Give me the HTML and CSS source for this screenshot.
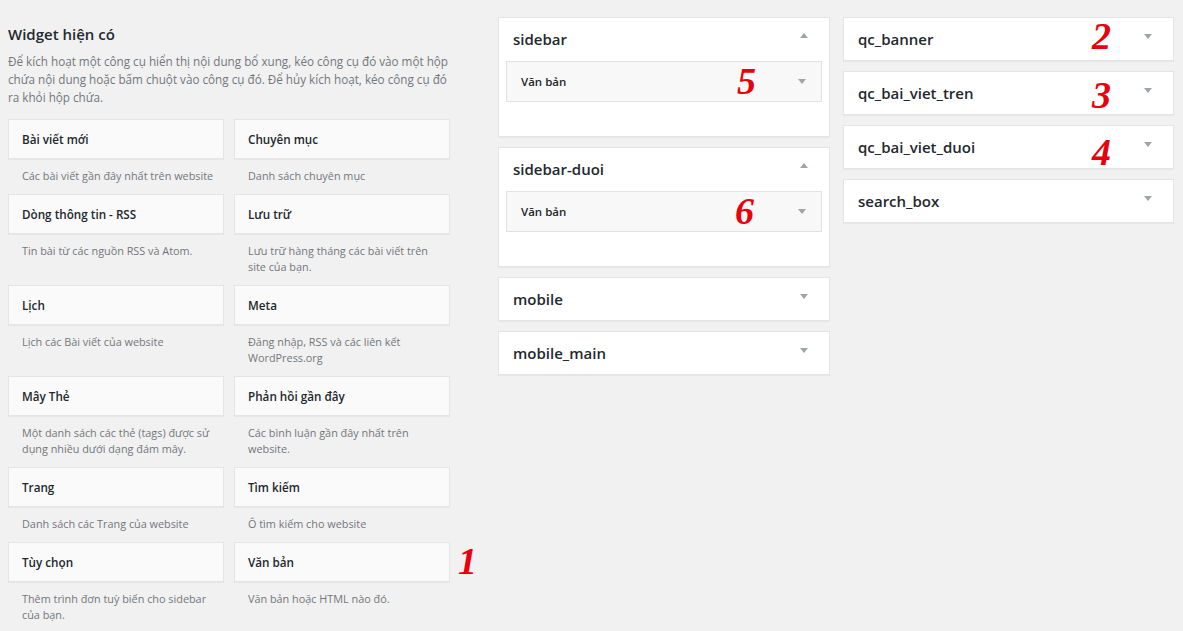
FILE: index.html
```html
<!DOCTYPE html>
<html lang="vi">
<head>
    <meta charset="UTF-8">
    <meta name="viewport" content="width=device-width, initial-scale=1.0">
    <title>Widget</title>
    <link rel="stylesheet" href="styles.css">
</head>
<body>
    <div class="wrap">
        <!-- Cột widget hiện có -->
        <div class="available">
            <h2 class="title">Widget hiện có</h2>
            <p class="intro">Để kích hoạt một công cụ hiển thị nội dung bổ xung, kéo công cụ đó vào một hộp chứa nội dung hoặc bấm chuột vào công cụ đó. Để hủy kích hoạt, kéo công cụ đó ra khỏi hộp chứa.</p>

            <div class="widget-list">
                <div class="item">
                    <div class="card">Bài viết mới</div>
                    <div class="desc">Các bài viết gần đây nhất trên website</div>
                </div>
                <div class="item">
                    <div class="card">Chuyên mục</div>
                    <div class="desc">Danh sách chuyên mục</div>
                </div>
                <div class="item">
                    <div class="card">Dòng thông tin - RSS</div>
                    <div class="desc">Tin bài từ các nguồn RSS và Atom.</div>
                </div>
                <div class="item">
                    <div class="card">Lưu trữ</div>
                    <div class="desc">Lưu trữ hàng tháng các bài viết trên site của bạn.</div>
                </div>
                <div class="item">
                    <div class="card">Lịch</div>
                    <div class="desc">Lịch các Bài viết của website</div>
                </div>
                <div class="item">
                    <div class="card">Meta</div>
                    <div class="desc">Đăng nhập, RSS và các liên kết WordPress.org</div>
                </div>
                <div class="item">
                    <div class="card">Mây Thẻ</div>
                    <div class="desc">Một danh sách các thẻ (tags) được sử dụng nhiều dưới dạng đám mây.</div>
                </div>
                <div class="item">
                    <div class="card">Phản hồi gần đây</div>
                    <div class="desc">Các bình luận gần đây nhất trên website.</div>
                </div>
                <div class="item">
                    <div class="card">Trang</div>
                    <div class="desc">Danh sách các Trang của website</div>
                </div>
                <div class="item">
                    <div class="card">Tìm kiếm</div>
                    <div class="desc">Ô tìm kiếm cho website</div>
                </div>
                <div class="item">
                    <div class="card">Tùy chọn</div>
                    <div class="desc">Thêm trình đơn tuỳ biến cho sidebar của bạn.</div>
                </div>
                <div class="item">
                    <div class="card">Văn bản<span class="num n1">1</span></div>
                    <div class="desc">Văn bản hoặc HTML nào đó.</div>
                </div>
            </div>
        </div>

        <!-- Cột sidebar giữa -->
        <div class="areas">
            <div class="box open">
                <div class="box-head">sidebar<span class="arrow up"></span></div>
                <div class="box-body">
                    <div class="placed">Văn bản<span class="num n5">5</span><span class="arrow down"></span></div>
                </div>
            </div>
            <div class="box open">
                <div class="box-head">sidebar-duoi<span class="arrow up"></span></div>
                <div class="box-body">
                    <div class="placed">Văn bản<span class="num n6">6</span><span class="arrow down"></span></div>
                </div>
            </div>
            <div class="box">
                <div class="box-head">mobile<span class="arrow down"></span></div>
            </div>
            <div class="box">
                <div class="box-head">mobile_main<span class="arrow down"></span></div>
            </div>
        </div>

        <!-- Cột sidebar phải -->
        <div class="areas last">
            <div class="box">
                <div class="box-head">qc_banner<span class="num n2">2</span><span class="arrow down"></span></div>
            </div>
            <div class="box">
                <div class="box-head">qc_bai_viet_tren<span class="num n3">3</span><span class="arrow down"></span></div>
            </div>
            <div class="box">
                <div class="box-head">qc_bai_viet_duoi<span class="num n4">4</span><span class="arrow down"></span></div>
            </div>
            <div class="box">
                <div class="box-head">search_box<span class="arrow down"></span></div>
            </div>
        </div>
    </div>
</body>
</html>
```

FILE: styles.css
```css
body {
    margin: 0;
    background-color: #f1f1f1;
    font-family: "Open Sans", "Noto Sans", sans-serif;
    color: #23282d;
}
.wrap {
    display: flex;
    align-items: flex-start;
    padding: 17px 0 0 8px;
}
.available {
    flex-shrink: 0;
    width: 442px;
    margin-right: 48px;
    padding-top: 7px;
}
.title {
    margin: 0;
    font-size: 15px;
    line-height: 20px;
    font-weight: 600;
}
.intro {
    margin: 8px 0 13px;
    font-size: 11.7px;
    line-height: 18px;
    color: #72777c;
}
.widget-list {
    display: grid;
    grid-template-columns: 216px 216px;
    column-gap: 10px;
}
.card {
    position: relative;
    height: 40px;
    box-sizing: border-box;
    padding: 0 13px;
    background-color: #fafafa;
    border: 1px solid #e5e5e5;
    box-shadow: 0 1px 1px rgba(0,0,0,0.04);
    font-size: 11.7px;
    font-weight: 600;
    line-height: 38px;
}
.desc {
    padding: 9px 6px 10px 14px;
    font-size: 10.85px;
    line-height: 16px;
    color: #72777c;
}
.areas {
    flex-shrink: 0;
    width: 332px;
    margin-right: 13px;
}
.areas.last {
    width: 331px;
    margin-right: 0;
}
.box {
    position: relative;
    margin-bottom: 10px;
    background-color: #fff;
    border: 1px solid #e5e5e5;
    box-shadow: 0 1px 1px rgba(0,0,0,0.04);
}
.box-head {
    position: relative;
    height: 42px;
    padding-left: 14px;
    font-size: 15px;
    font-weight: 600;
    line-height: 42px;
}
.box-body {
    padding: 1px 7px 34px;
}
.placed {
    position: relative;
    height: 39px;
    padding-left: 14px;
    background-color: #f8f8f8;
    border: 1px solid #e2e2e2;
    font-size: 11.5px;
    font-weight: 600;
    line-height: 39px;
}
.arrow {
    position: absolute;
    width: 0;
    height: 0;
    border-left: 4px solid transparent;
    border-right: 4px solid transparent;
}
.arrow.up {
    right: 21px;
    top: 15px;
    border-bottom: 5px solid #a0a5aa;
}
.arrow.down {
    right: 21px;
    top: 16px;
    border-top: 5px solid #a0a5aa;
}
.placed .arrow.down {
    right: 15px;
    top: 17px;
}
.num {
    position: absolute;
    font-family: "Liberation Serif", "DejaVu Serif", serif;
    font-style: italic;
    font-weight: bold;
    font-size: 38px;
    line-height: 38px;
    color: #e8000b;
}
.n1 { left: 223px; top: -1px; }
.n2 { left: 248px; top: -1px; }
.n3 { left: 248px; top: 4px; }
.n4 { left: 248px; top: 7px; }
.n5 { left: 230px; top: 0; }
.n6 { left: 228px; top: 0; }
```
